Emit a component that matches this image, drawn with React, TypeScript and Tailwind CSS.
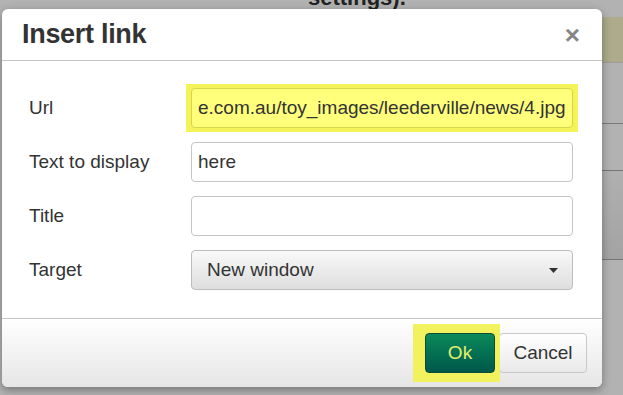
import { useState } from "react";

const font = { fontFamily: '"Liberation Sans", Arial, sans-serif' };

const Field: React.FC<{ label: string; children: React.ReactNode }> = ({ label, children }) => (
	<div className="flex items-center h-10">
		<label className="w-[189px] shrink-0 pl-[27px] text-[19px] text-[#333]">{label}</label>
		<div className="relative w-[382px] h-10">{children}</div>
	</div>
);

const App: React.FC = () => {
	const [text, setText] = useState("here");
	const [title, setTitle] = useState("");

	return (
		<div className="relative w-[623px] h-[395px] overflow-hidden bg-[#b2b2b2]" style={font}>
			{/* page behind the modal */}
			<div className="absolute left-[308px] -top-[19px] text-[22px] font-bold text-[#222]">settings).</div>
			<div className="absolute right-0 top-[17px] w-[24px] h-[45px] bg-[#adab8c]" />
			<div className="absolute right-0 top-[62px] w-[24px] h-px bg-[#9c9c9c]" />
			<div className="absolute right-0 top-[123px] w-[24px] h-px bg-[#7a7a7a]" />
			<div className="absolute right-0 top-[170px] w-[24px] h-[90px] bg-gradient-to-b from-[#b0b0b0] to-[#a3a3a3] border-t border-b border-[#767676]" />

			{/* dialog */}
			<div className="absolute left-[2px] top-[9px] w-[600px] h-[378px] flex flex-col bg-white rounded-[6px] shadow-[0_3px_8px_rgba(0,0,0,0.35)]">
				<div className="flex items-center justify-between h-[52px] pl-[20px] pr-[22px] border-b border-[#c5c5c5] shrink-0">
					<h1 className="text-[27px] font-bold text-[#333] tracking-[-0.3px]">Insert link</h1>
					<button className="text-[26px] font-bold leading-none text-[#858585]">×</button>
				</div>

				<div className="flex flex-col gap-[14px] pt-[27px] flex-1">
					<Field label="Url">
						<div className="absolute -left-[5px] -right-[5px] -top-[4px] -bottom-[4px] bg-[#f4f45a]" />
						<div className="relative h-full flex items-center px-[6px] rounded-[4px] border border-[#d6d64c] bg-[#ffff7c] text-[19px] text-[#333] whitespace-nowrap overflow-hidden">
							e.com.au/toy_images/leederville/news/4.jpg
						</div>
					</Field>
					<Field label="Text to display">
						<input
							className="w-full h-full px-[6px] rounded-[4px] border border-[#c5c5c5] text-[19px] text-[#333] outline-none"
							value={text}
							onChange={(e) => setText(e.target.value)}
						/>
					</Field>
					<Field label="Title">
						<input
							className="w-full h-full px-[6px] rounded-[4px] border border-[#c5c5c5] text-[19px] text-[#333] outline-none"
							value={title}
							onChange={(e) => setTitle(e.target.value)}
						/>
					</Field>
					<Field label="Target">
						<button className="w-full h-full flex items-center justify-between pl-[15px] pr-[14px] rounded-[4px] border border-[#bdbdbd] bg-gradient-to-b from-[#f9f9f9] to-[#dedede] text-[19px] text-[#333]">
							<span>New window</span>
							<svg width="9" height="5" viewBox="0 0 9 5">
								<path d="M0 0h9L4.5 5z" fill="#333" />
							</svg>
						</button>
					</Field>
				</div>

				<div className="flex items-start justify-end gap-[4px] h-[69px] pt-[14px] pr-[15px] border-t border-[#c5c5c5] rounded-b-[6px] bg-gradient-to-b from-white to-[#e6e6e6] shrink-0">
					<div className="relative">
						<div className="absolute -left-[12px] -right-[5px] -top-[9px] -bottom-[9px] bg-[#f2f25e]" />
						<button className="relative w-[70px] h-10 rounded-[4px] border border-[#0a4d3d] bg-gradient-to-b from-[#0c8a5a] to-[#00584a] text-[19px] text-[#e3ee6c]">
							Ok
						</button>
					</div>
					<button className="w-[88px] h-10 rounded-[4px] border border-[#c8c8c8] bg-gradient-to-b from-white to-[#e9e9e9] text-[19px] text-[#333]">
						Cancel
					</button>
				</div>
			</div>
		</div>
	);
};

export default App;
